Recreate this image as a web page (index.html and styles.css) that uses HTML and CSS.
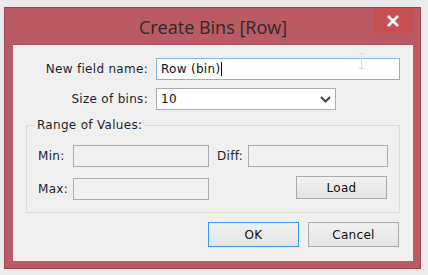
FILE: index.html
```html
<!DOCTYPE html>
<html>
<head>
<meta charset="utf-8">
<link rel="stylesheet" href="styles.css">
</head>
<body>
<div class="window">
  <div class="titlebar">
    <span class="title">Create Bins [Row]</span>
    <div class="close"><svg width="14" height="12" viewBox="0 0 14 12"><path d="M2 1 L12 11 M12 1 L2 11" stroke="#fff" stroke-width="2.6" fill="none"/></svg></div>
  </div>
  <div class="client">
    <div class="row">
      <span class="lbl">New field name:</span>
      <div class="field focus"><span>Row (bin)</span><span class="caret"></span>
        <svg class="ibeam" width="7" height="16" viewBox="0 0 7 16"><path d="M0.5 0.5 H6.5 M3.5 0.5 V15.5 M0.5 15.5 H6.5" stroke="#dcdcdc" stroke-width="1" fill="none"/></svg>
      </div>
    </div>
    <div class="row row2">
      <span class="lbl">Size of bins:</span>
      <div class="field select"><span>10</span>
        <svg class="chev" width="11" height="7" viewBox="0 0 11 7"><path d="M1 1 L5.5 5.5 L10 1" stroke="#444" stroke-width="2" fill="none"/></svg>
      </div>
    </div>
    <div class="group">
      <span class="legend">Range of Values:</span>
      <div class="ggrid">
        <span class="glbl">Min:</span>
        <div class="box w136"></div>
        <span class="glbl dl">Diff:</span>
        <div class="box w140"></div>
        <span class="glbl">Max:</span>
        <div class="box w136"></div>
        <span></span>
        <div class="btn load">Load</div>
      </div>
    </div>
    <div class="actions">
      <div class="btn ok">OK</div>
      <div class="btn">Cancel</div>
    </div>
  </div>
</div>
</body>
</html>
```

FILE: styles.css
```css
html, body {
  margin: 0;
  padding: 0;
  background: #eaeaea;
}
body {
  font-family: "DejaVu Sans", sans-serif;
  font-size: 12px;
  letter-spacing: 0.3px;
  color: #1f1f2a;
}
.window {
  box-sizing: border-box;
  margin: 7px 0 0 4px;
  width: 417px;
  height: 262px;
  border: 1px solid #9e4650;
  background: #b95a64;
  padding: 0 7px 7px 8px;
  display: flex;
  flex-direction: column;
}
.titlebar {
  position: relative;
  height: 36px;
  display: flex;
  align-items: center;
  justify-content: center;
}
.title {
  font-family: "Open Sans", sans-serif;
  font-size: 18px;
  letter-spacing: 0;
  color: #2e2a2b;
  margin-top: 2px;
}
.close {
  position: absolute;
  left: 360px;
  top: 0;
  width: 40px;
  height: 25px;
  background: #c75050;
  display: flex;
  align-items: center;
  justify-content: center;
}
.client {
  flex: 1;
  background: #f0f0f0;
  border-top: 1px solid #a9525c;
  padding: 13px 13px 0 13px;
}
.row {
  display: flex;
  align-items: center;
  gap: 8px;
}
.row2 { margin-top: 8px; }
.lbl {
  width: 122px;
  text-align: right;
  white-space: nowrap;
}
.field {
  position: relative;
  box-sizing: border-box;
  height: 22px;
  background: #fff;
  border: 1px solid #acacac;
  display: flex;
  align-items: center;
  padding-left: 4px;
  color: #111;
}
.field.focus {
  width: 244px;
  border-color: #7eb4ea;
}
.caret {
  width: 1px;
  height: 14px;
  background: #000;
  margin-left: 1px;
}
.ibeam {
  position: absolute;
  left: 201px;
  top: -6px;
}
.select { width: 180px; }
.chev {
  position: absolute;
  right: 4px;
  top: 7px;
}
.group {
  position: relative;
  box-sizing: border-box;
  margin-top: 15px;
  width: 374px;
  height: 88px;
  border: 1px solid #dcdcdc;
  padding: 19px 0 0 11px;
}
.legend {
  position: absolute;
  left: 8px;
  top: -8px;
  padding: 0 2px;
  background: #f0f0f0;
}
.ggrid {
  display: grid;
  grid-template-columns: 35px 136px 39px 140px;
  grid-template-rows: 22px 22px;
  row-gap: 11px;
  align-items: center;
}
.dl { margin-left: 8px; }
.box {
  box-sizing: border-box;
  height: 22px;
  border: 1px solid #adadad;
  background: #f0f0f0;
}
.w136 { width: 136px; }
.w140 { width: 140px; }
.btn {
  box-sizing: border-box;
  width: 91px;
  height: 25px;
  border: 1px solid #acacac;
  background: linear-gradient(#f0f0f0, #e5e5e5);
  display: flex;
  align-items: center;
  justify-content: center;
  color: #111;
}
.load {
  justify-self: start;
  margin-left: 48px;
  height: 23px;
  margin-top: -3px;
}
.actions {
  display: flex;
  justify-content: flex-end;
  gap: 9px;
  margin-top: 9px;
  padding-right: 1px;
}
.ok {
  border-color: #3399ff;
}
```
